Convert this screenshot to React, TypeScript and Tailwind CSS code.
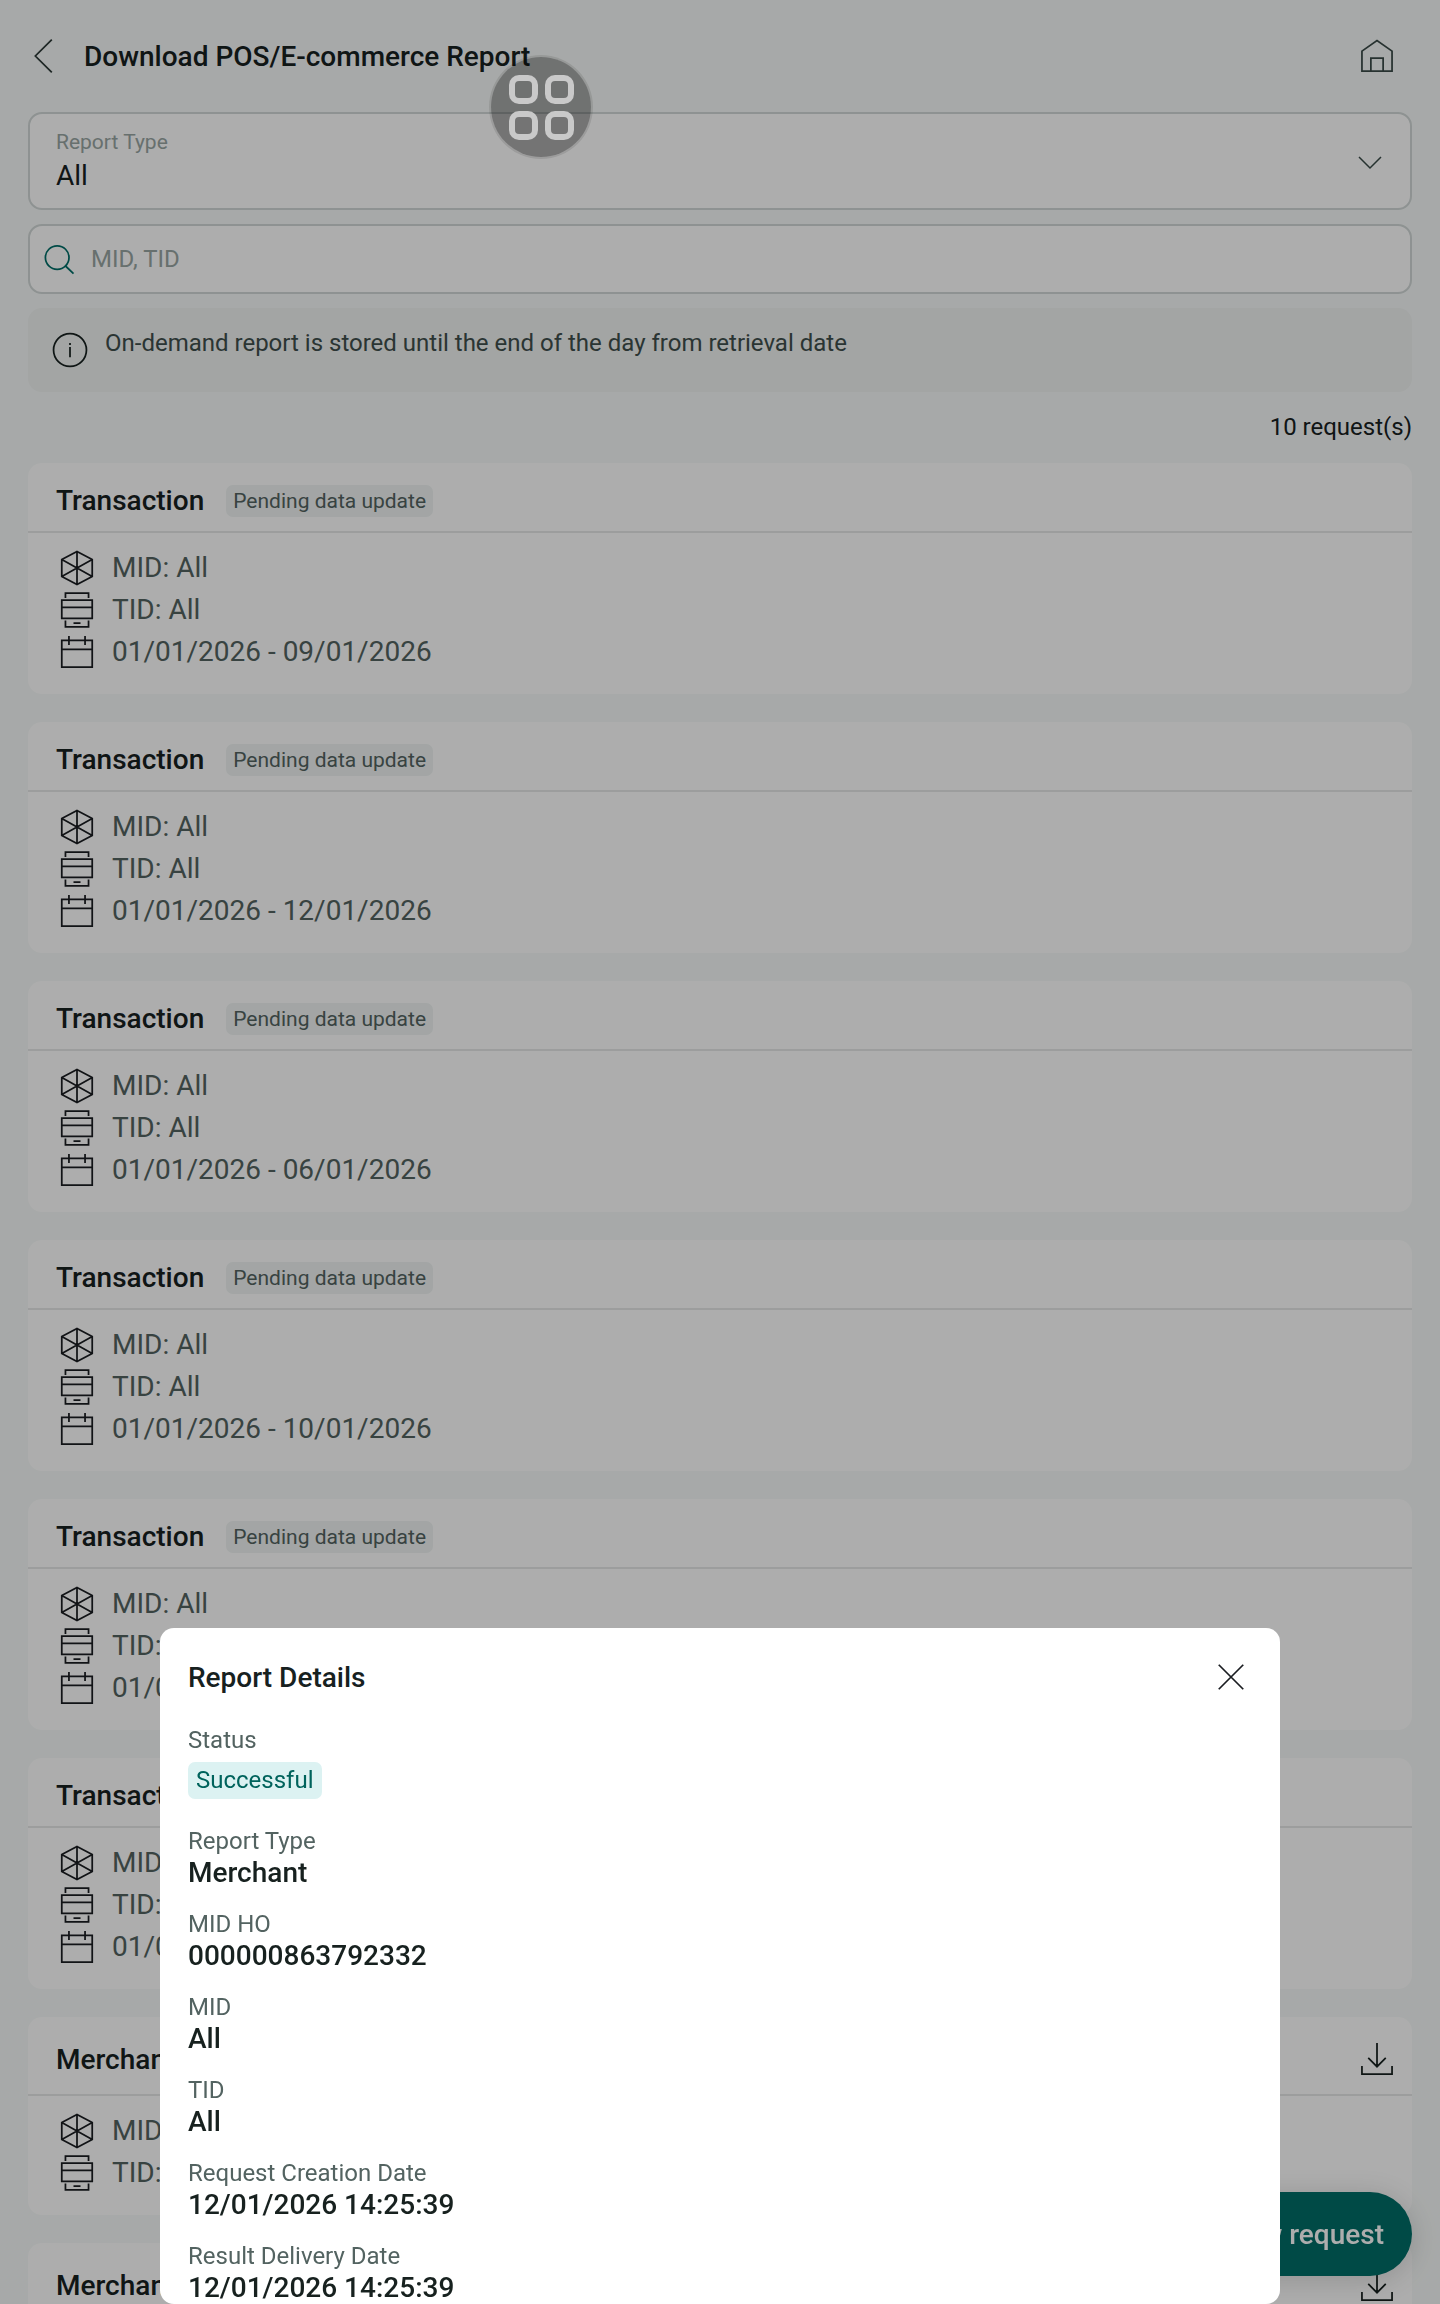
import { useState } from "react";
import type { ReactNode } from "react";

type Report = {
  id: number;
  type: string;
  status?: string;
  mid: string;
  tid: string;
  period?: string;
};

const reports: Report[] = [
  { id: 1, type: "Transaction", status: "Pending data update", mid: "All", tid: "All", period: "01/01/2026 - 09/01/2026" },
  { id: 2, type: "Transaction", status: "Pending data update", mid: "All", tid: "All", period: "01/01/2026 - 12/01/2026" },
  { id: 3, type: "Transaction", status: "Pending data update", mid: "All", tid: "All", period: "01/01/2026 - 06/01/2026" },
  { id: 4, type: "Transaction", status: "Pending data update", mid: "All", tid: "All", period: "01/01/2026 - 10/01/2026" },
  { id: 5, type: "Transaction", status: "Pending data update", mid: "All", tid: "All", period: "01/01/2026 - 09/01/2026" },
  { id: 6, type: "Transaction", status: "Pending data update", mid: "All", tid: "All", period: "01/01/2026 - 09/01/2026" },
  { id: 7, type: "Merchant", mid: "All", tid: "All" },
  { id: 8, type: "Merchant", mid: "All", tid: "All" },
];

const details = [
  { label: "Report Type", value: "Merchant" },
  { label: "MID HO", value: "000000863792332" },
  { label: "MID", value: "All" },
  { label: "TID", value: "All" },
  { label: "Request Creation Date", value: "12/01/2026 14:25:39" },
  { label: "Result Delivery Date", value: "12/01/2026 14:25:39" },
];

const Icon = ({ children }: { children: ReactNode }) => (
  <svg
    viewBox="0 0 24 24"
    fill="none"
    stroke="currentColor"
    strokeWidth="1"
    className="size-[42px] shrink-0"
    aria-hidden="true"
  >
    {children}
  </svg>
);

const MidIcon = () => (
  <Icon>
    <path d="M12 2.6 20.7 7.2v9.6L12 21.5l-8.7-4.7V7.2zM12 2.6v18.9M3.3 7.2l17.4 9.6M20.7 7.2 3.3 16.8" />
  </Icon>
);

const TidIcon = () => (
  <Icon>
    <path d="M5.4 5.1V2.4h13.2v2.7M3.3 6.3h17.4v10.5H3.3zM3.3 10.5h17.4M5.4 18v3.6h13.2V18M10 19.5h4" />
  </Icon>
);

const CalendarIcon = () => (
  <Icon>
    <path d="M3.3 5.4h17.4v15.3H3.3zM3.3 10.5h17.4M7.4 2.9V8M16.6 2.9V8" />
  </Icon>
);

const DownloadIcon = () => (
  <Icon>
    <path d="M12 2.9v13.4M7 11.4l5 5 5-5M3.4 16v4.7h17.2V16" />
  </Icon>
);

const InfoRow = ({ icon, children }: { icon: ReactNode; children: ReactNode }) => (
  <li className="flex items-center gap-[14px] text-[28px] leading-[42px] text-[#536361]">
    <span className="text-[#1a1d21]">{icon}</span>
    <span>{children}</span>
  </li>
);

const ReportCard = ({ report }: { report: Report }) => (
  <article className="rounded-[14px] bg-white">
    <div className="flex items-center gap-[22px] border-b-2 border-[#e6e8e8] pt-[21px] pr-[14px] pb-[14px] pl-7">
      <h2 className="text-[28px] leading-[33px] font-medium text-[#17211f]">
        {report.type}
      </h2>
      {report.status ? (
        <span className="rounded-[7px] bg-[#f0f4f3] px-[7px] text-[21px] leading-8 text-[#536361]">
          {report.status}
        </span>
      ) : (
        <button type="button" aria-label="Download" className="ml-auto text-[#17211f]">
          <DownloadIcon />
        </button>
      )}
    </div>
    <ul className="px-7 pt-[14px] pb-[21px]">
      <InfoRow icon={<MidIcon />}>MID: {report.mid}</InfoRow>
      <InfoRow icon={<TidIcon />}>TID: {report.tid}</InfoRow>
      {report.period && (
        <InfoRow icon={<CalendarIcon />}>{report.period}</InfoRow>
      )}
    </ul>
  </article>
);

const ReportDetails = ({ onClose }: { onClose: () => void }) => (
  <div className="fixed inset-0 z-20 flex items-end justify-center bg-black/32">
    <section
      role="dialog"
      aria-labelledby="details-title"
      className="w-full max-w-[1120px] rounded-[14px] bg-white px-7 pt-7"
    >
      <div className="flex items-center justify-between">
        <h2 id="details-title" className="text-[28px] leading-[33px] font-medium text-[#17211f]">
          Report Details
        </h2>
        <button type="button" aria-label="Close" onClick={onClose} className="text-[#1a1d21]">
          <Icon>
            <path d="m5 5 14 14M19 5 5 19" />
          </Icon>
        </button>
      </div>

      <dl className="mt-7 flex flex-col gap-[21px]">
        <div className="mb-[7px]">
          <dt className="text-2xl leading-[29px] text-[#536361]">Status</dt>
          <dd className="mt-[7px] w-fit rounded-[7px] bg-[#dcf2f2] px-2 text-2xl leading-[37px] text-[#00635c]">
            Successful
          </dd>
        </div>
        {details.map((item) => (
          <div key={item.label}>
            <dt className="text-2xl leading-[29px] text-[#536361]">{item.label}</dt>
            <dd className="text-[28px] leading-[33px] font-medium text-[#17211f]">{item.value}</dd>
          </div>
        ))}
      </dl>
    </section>
  </div>
);

const App = () => {
  const [reportType, setReportType] = useState("All");
  const [keyword, setKeyword] = useState("");
  const [detailsVisible, setDetailsVisible] = useState(true);

  return (
    <div className="h-screen overflow-hidden bg-[#f7faf9] font-[Roboto,sans-serif] text-[#17211f]">
      <header className="flex h-28 items-center pr-[42px] pl-[21px]">
        <button type="button" aria-label="Back" className="text-[#2d3a38]">
          <Icon>
            <path d="M17.6 2.6 8.2 12l9.4 9.4" />
          </Icon>
        </button>
        <h1 className="ml-[21px] text-[28px] leading-[33px] font-medium">
          Download POS/E-commerce Report
        </h1>
        <a href="#home" aria-label="Home" className="ml-auto text-[#3a4a48]">
          <Icon>
            <path d="M3.4 9.2 12 3.2l8.6 6v11.5H3.4zM8.5 20.7v-7.5h7v7.5" />
          </Icon>
        </a>
      </header>

      <main className="px-7">
        <div className="flex items-center rounded-[14px] border-2 border-[#d1d8d7] bg-white px-[26px] py-4">
          <div className="flex flex-1 flex-col gap-1">
            <label htmlFor="report-type" className="text-[21px] leading-[25px] text-[#98a5a3]">
              Report Type
            </label>
            <select
              id="report-type"
              value={reportType}
              onChange={(e) => setReportType(e.target.value)}
              className="h-[33px] w-full appearance-none bg-transparent text-[28px] leading-[33px] outline-none"
            >
              <option>All</option>
              <option>Transaction</option>
              <option>Merchant</option>
            </select>
          </div>
          <svg viewBox="0 0 28 28" fill="none" stroke="#3a4a48" strokeWidth="1.5" className="size-7 shrink-0" aria-hidden="true">
            <path d="m3 10 11 11 11-11" />
          </svg>
        </div>

        <div className="mt-[14px] flex h-[70px] items-center gap-[14px] rounded-[14px] border-2 border-[#d1d8d7] bg-white px-3">
          <svg viewBox="0 0 35 35" fill="none" stroke="#006e68" strokeWidth="1.75" className="size-[35px] shrink-0" aria-hidden="true">
            <circle cx="15.2" cy="15.6" r="11.8" />
            <path d="m23.5 24 8 7.6" />
          </svg>
          <input
            type="text"
            aria-label="Search by MID, TID"
            placeholder="MID, TID"
            value={keyword}
            onChange={(e) => setKeyword(e.target.value)}
            className="w-full bg-transparent text-2xl leading-[29px] outline-none placeholder:text-[#98a5a3]"
          />
        </div>

        <div className="mt-[14px] flex items-start gap-[14px] rounded-[14px] bg-[#f0f3f2] p-[21px]">
          <svg viewBox="0 0 24 24" fill="none" stroke="#17211f" className="size-[42px] shrink-0" aria-hidden="true">
            <circle cx="12" cy="12" r="9.4" />
            <path d="M12 10.3v5.8M12 8v1.2" />
          </svg>
          <p className="text-2xl leading-[29px] text-[#3f4e4c]">
            On-demand report is stored until the end of the day from retrieval date
          </p>
        </div>

        <p className="mt-[21px] text-right text-2xl leading-[29px]">10 request(s)</p>

        <div className="mt-[21px] flex flex-col gap-7">
          {reports.map((report) => (
            <ReportCard key={report.id} report={report} />
          ))}
        </div>
      </main>

      <button
        type="button"
        className="fixed right-7 bottom-7 z-10 h-[84px] rounded-full bg-[#006e68] px-7 text-[28px] leading-[33px] font-medium text-white shadow-[0_4px_28px_rgba(0,0,0,0.16)]"
      >
        New request
      </button>

      {detailsVisible && <ReportDetails onClose={() => setDetailsVisible(false)} />}

      {/* floating shortcut bubble, always above the dialog */}
      <button
        type="button"
        aria-label="Shortcuts"
        className="fixed top-[55px] left-[489px] z-30 grid size-[104px] grid-cols-2 place-content-center gap-[7px] rounded-full border-2 border-black/10 bg-black/33 bg-clip-padding px-4"
      >
        {[0, 1, 2, 3].map((i) => (
          <span
            key={i}
            className="size-[29px] rounded-[10px] border-[6px] border-[#c9c9c9] odd:justify-self-end"
          />
        ))}
      </button>
    </div>
  );
};

export default App;
